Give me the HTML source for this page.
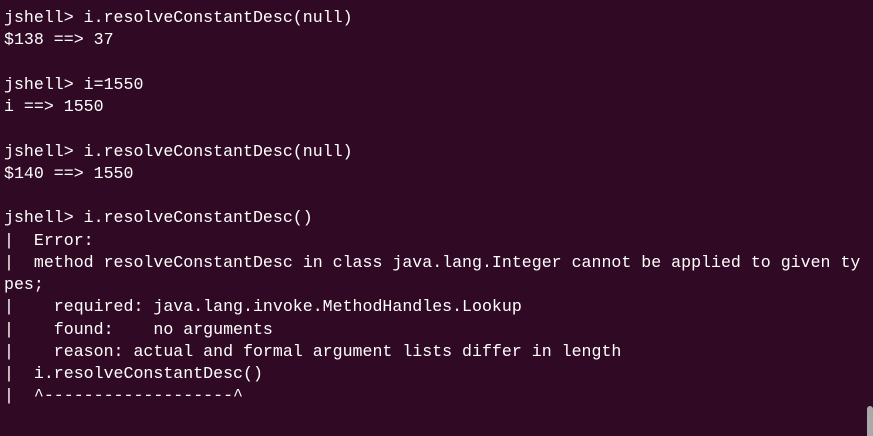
<!DOCTYPE html>
<html><head><style>
html,body{margin:0;padding:0;width:873px;height:427px;overflow:hidden;background:#300a24;}
pre{margin:0;padding:7px 0 0 4px;font-family:"Liberation Mono",monospace;font-size:16.6px;line-height:22.25px;color:#ffffff;white-space:pre;}
.sb{position:absolute;left:867px;top:406px;width:6px;height:30px;background:#a9a9a9;border-radius:3px 3px 0 0;}
</style></head><body>
<pre>jshell&gt; i.resolveConstantDesc(null)
$138 ==&gt; 37

jshell&gt; i=1550
i ==&gt; 1550

jshell&gt; i.resolveConstantDesc(null)
$140 ==&gt; 1550

jshell&gt; i.resolveConstantDesc()
|  Error:
|  method resolveConstantDesc in class java.lang.Integer cannot be applied to given ty
pes;
|    required: java.lang.invoke.MethodHandles.Lookup
|    found:    no arguments
|    reason: actual and formal argument lists differ in length
|  i.resolveConstantDesc()
|  ^-------------------^</pre>
<div class="sb"></div>
</body></html>
